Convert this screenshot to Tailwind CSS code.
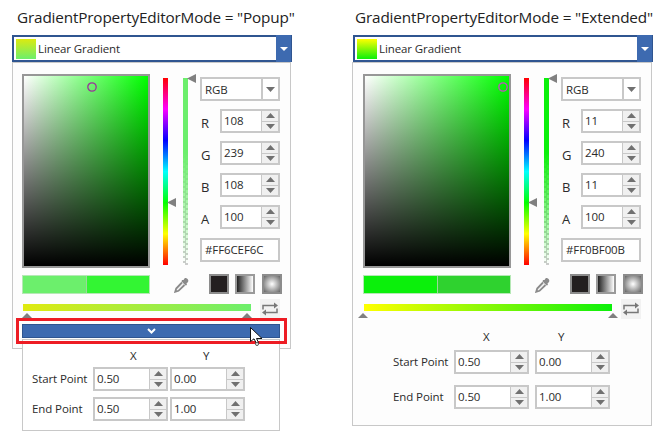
<!DOCTYPE html>
<html lang="en">
<head>
  <meta charset="UTF-8" />
  <title>GradientPropertyEditorMode</title>
  <script src="https://cdn.jsdelivr.net/npm/@tailwindcss/browser@4"></script>
</head>
<body class="bg-white w-[672px] h-[446px] overflow-hidden relative font-['Open_Sans',sans-serif] text-[11.5px] tracking-[-0.1px] text-[#2b2b2b]">
  <div class="flex items-start pl-[12px]">
    <div id="popup" class="w-[279px] shrink-0"></div>
    <div id="extended" class="w-[300px] ml-[61px] shrink-0"></div>
  </div>

  <!-- red highlight + mouse cursor over the popup toggle -->
  <div class="absolute left-[16px] top-[318px] w-[271px] h-[26px] border-[3px] border-[#ed1c24]"></div>
  <svg class="absolute left-[249px] top-[326px]" width="16" height="21" viewBox="0 0 16 21">
    <path d="M1.500 1.500 V15.500 L5 12.800 L7.500 17.500 L9.500 16.500 L7.500 12.500 H13 Z" fill="#fff" stroke="#111" stroke-width="1" />
    <circle cx="8" cy="18" r="1.500" fill="#fff" stroke="#555" stroke-width="1" />
  </svg>

  <script>
    function tri(dir) {
      // little grey thumbs next to the sliders
      if (dir === 'left') return '<svg width="9" height="9" viewBox="0 0 9 9"><polygon points="0,4.5 9,0 9,9" fill="#808080"/></svg>';
      return '';
    }

    function spin(w, h, value) {
      return `
        <div class="flex border-2 border-[#c8c8c8] bg-white box-border" style="width:${w}px;height:${h}px">
          <div class="flex-1 flex items-center pl-[2px] leading-none text-[11.5px]">${value}</div>
          <div class="w-[17px] flex flex-col gap-[1px] bg-[#c8c8c8] border-l border-[#c8c8c8]">
            <div class="flex-1 bg-[#f0f0f0] flex items-center justify-center"><svg width="9" height="5" viewBox="0 0 9 5"><polygon points="4.5,0 9,5 0,5" fill="#707070"/></svg></div>
            <div class="flex-1 bg-[#f0f0f0] flex items-center justify-center"><svg width="9" height="5" viewBox="0 0 9 5"><polygon points="0,0 9,0 4.5,5" fill="#707070"/></svg></div>
          </div>
        </div>`;
    }

    function rgbaRow(label, value) {
      return `
        <div class="flex items-center h-[24px]">
          <span class="w-[20px] pl-px pt-[5px] text-[13px] leading-none">${label}</span>
          ${spin(60, 24, value)}
        </div>`;
    }

    function header(title, titleLeft, titleTop, swatch, dropLeft, comboW) {
      return `
        <div class="h-[35px] text-[15.3px] leading-none whitespace-nowrap tracking-[-0.16px] text-[#222]" style="padding-left:${titleLeft}px;padding-top:${titleTop}px">${title}</div>
        <div class="h-[27px] border-2 border-[#2f5590] flex items-center pl-[2px] bg-white relative" style="margin-left:${dropLeft}px;width:${comboW}px">
          <div class="w-[20px] h-[20px] ${swatch}"></div>
          <span class="ml-[2px] flex-1 leading-none">Linear Gradient</span>
          <div class="w-[15px] h-[27px] -mr-px bg-[#3d6ab0] flex items-center justify-center"><svg width="8" height="4" viewBox="0 0 8 4"><polygon points="0,0 8,0 4,4" fill="#fff"/></svg></div>
        </div>`;
    }

    function editor(o) {
      return `
        <div class="grid grid-cols-[1fr_130px]">
          <div class="h-[194px] relative border-2 border-[#979797] bg-[linear-gradient(to_top,#000,transparent),linear-gradient(to_right,#fff,#00ff00)]">
            <svg class="absolute ${o.ring}" width="10" height="10" viewBox="0 0 10 10"><circle cx="5" cy="5" r="4.200" fill="none" stroke="${o.ringColor}" stroke-width="1.300"/></svg>
          </div>
          <div class="flex items-start pl-[13px] relative">
            <div class="w-[5px] h-[187px] mt-[4px] bg-[linear-gradient(to_bottom,#f00,#f0f,#00f,#0ff,#0f0,#ff0,#f00)]"></div>
            <div class="absolute left-[17px] top-[124px]">${tri('left')}</div>
            <div class="w-[5px] h-[187px] mt-[4px] ml-[15px] ${o.alpha} bg-[length:100%_100%,5px_5px]"></div>
            <div class="absolute left-[37px] top-[0px]">${tri('left')}</div>
            <div class="w-[80px] ml-[12px] mt-[3px] flex flex-col">
              <div class="h-[24px] border-2 border-[#c8c8c8] bg-white flex items-center">
                <span class="flex-1 pl-[3px] pt-px leading-none">RGB</span>
                <div class="w-[17px] h-full border-l-2 border-[#c8c8c8] flex items-center justify-center"><svg width="9" height="5" viewBox="0 0 9 5"><polygon points="0,0 9,0 4.5,5" fill="#707070"/></svg></div>
              </div>
              <div class="mt-[8px] flex flex-col gap-[8px]">
                ${o.rgba.map(r => rgbaRow(r[0], r[1])).join('')}
              </div>
              <div class="mt-[9px] h-[24px] border-2 border-[#c8c8c8] bg-white flex items-center pl-[3px] leading-none">${o.hex}</div>
            </div>
          </div>
        </div>

        <div class="grid grid-cols-[1fr_130px] mt-[7px]">
          <div class="h-[19px] flex border border-[#b5e8b5]">
            <div class="flex-1 ${o.oldColor}"></div>
            <div class="flex-1 border-l border-[#9ad89a] ${o.newColor}"></div>
          </div>
          <div class="flex items-start pl-[24px] -mt-px">
            <svg class="mt-[3px] shrink-0" width="16" height="16" viewBox="0 0 16 16" fill="none" stroke="#8a8a8a">
              <path d="M9.500 3 L10.500 1.500 C12 0 15.500 3 14 5 L12.500 6.500 L13 8 L11.500 8.500 L7.500 4.500 L8 3 Z" fill="#8a8a8a" stroke="none"/>
              <path d="M8 5.500 L2.200 11.500 L1.200 14.800 L4.500 13.800 L10.500 8" stroke-width="1.800" fill="#f4f4f4"/>
            </svg>
            <div class="ml-[19px] w-[20px] h-[20px] border-2 border-[#8c8c8c] bg-[#231f20] shrink-0"></div>
            <div class="ml-[6px] w-[20px] h-[20px] border-2 border-[#9a9a9a] bg-[linear-gradient(to_right,#222,#fff)] shrink-0"></div>
            <div class="ml-[7px] w-[20px] h-[20px] border-2 border-[#8c8c8c] bg-[radial-gradient(circle,#fff,#666)] shrink-0"></div>
          </div>
        </div>

        <div class="flex items-start mt-[5px]">
          <div class="relative mt-[5px] h-[7px] ml-px ${o.bar}" style="width:${o.barW}px">
            <svg class="absolute top-[9px]" style="left:${o.thumbL}px" width="10" height="5" viewBox="0 0 10 5"><polygon points="5,0 10,5 0,5" fill="#808080"/></svg>
            <svg class="absolute top-[9px]" style="left:${o.thumbR}px" width="10" height="5" viewBox="0 0 10 5"><polygon points="5,0 10,5 0,5" fill="#808080"/></svg>
          </div>
          <div class="ml-[9px] w-[20px] h-[20px] bg-[#f2f2f2] flex items-center justify-center">
            <svg width="16" height="14" viewBox="0 0 16 14" fill="none" stroke="#777" stroke-width="1.500">
              <path d="M1 7.500 V3.500 H12"/>
              <path d="M15 6.500 V10.500 H4"/>
              <polygon points="12,0.500 16,3.500 12,6.500" fill="#777" stroke="none"/>
              <polygon points="4,7.500 0,10.500 4,13.500" fill="#777" stroke="none"/>
            </svg>
          </div>
        </div>`;
    }

    function pointRow(label, x, y, gap) {
      return `
        <div class="flex items-center">
          <span class="w-[61px] leading-none">${label}</span>
          ${spin(75, 24, x)}
          <div class="shrink-0" style="width:${gap}px"></div>
          ${spin(75, 24, y)}
        </div>`;
    }

    document.getElementById('popup').innerHTML =
      header('GradientPropertyEditorMode = "Popup"', 5, 10, 'bg-[linear-gradient(to_bottom,#dcea10,#6cef6c)]', 0, 280) + `
      <div class="w-[279px] border border-[#c8c8c8] bg-[#fdfdfd] pl-[9px] pr-[10px] pt-[11px] pb-[10px]">
        ${editor({
          ring: 'left-[63px] top-[6px]',
          ringColor: '#993399',
          alpha: 'bg-[linear-gradient(to_bottom,#6cef6c,#6cef6c_40%,transparent),conic-gradient(#ccc_25%,#fff_0_50%,#ccc_0_75%,#fff_0)]',
          rgba: [['R', '108'], ['G', '239'], ['B', '108'], ['A', '100']],
          hex: '#FF6CEF6C',
          oldColor: 'bg-[#6cef6c]',
          newColor: 'bg-[#33f533]',
          bar: 'bg-[linear-gradient(to_right,#e0ea10,#6cef6c)]',
          barW: 228,
          thumbL: -1,
          thumbR: 219
        })}
        <button class="block w-[258px] h-[14px] mt-[5px] bg-[#3d6ab0] border border-[#2f5590]">
          <svg class="mx-auto" width="9" height="6" viewBox="0 0 9 6" fill="none" stroke="#fff" stroke-width="2"><path d="M1 1 L4.500 4.500 L8 1"/></svg>
        </button>
      </div>
      <div class="relative -mt-[10px] ml-[10px] w-[258px] h-[92px] border border-[#c8c8c8] bg-white">
        <div class="flex h-[27px] leading-none pt-[9px]">
          <span class="absolute left-[107px] top-[10px]">X</span>
          <span class="absolute left-[180px] top-[10px]">Y</span>
        </div>
        <div class="pl-[9px]">
          ${pointRow('Start Point', '0.50', '0.00', 2)}
          <div class="h-[6px]"></div>
          ${pointRow('End Point', '0.50', '1.00', 2)}
        </div>
      </div>`;

    document.getElementById('extended').innerHTML =
      header('GradientPropertyEditorMode = "Extended"', 3, 10, 'bg-[linear-gradient(to_bottom,#ffff00,#0bf00b)]', 1, 300) + `
      <div class="w-[300px] h-[364px] border border-[#c8c8c8] bg-[#fdfdfd] pl-[10px] pr-[10px] pt-[11px]">
        ${editor({
          ring: 'left-[133px] top-[6px]',
          ringColor: '#c050c0',
          alpha: 'bg-[linear-gradient(to_bottom,#0bf00b,#0bf00b_40%,transparent),conic-gradient(#ccc_25%,#fff_0_50%,#ccc_0_75%,#fff_0)]',
          rgba: [['R', '11'], ['G', '240'], ['B', '11'], ['A', '100']],
          hex: '#FF0BF00B',
          oldColor: 'bg-[#0bf00b]',
          newColor: 'bg-[#2fd22f]',
          bar: 'bg-[linear-gradient(to_right,#ffff00,#0bf00b)]',
          barW: 248,
          thumbL: -6,
          thumbR: 244
        })}
        <div class="relative h-[25px] leading-none">
          <span class="absolute left-[120px] top-[12px]">X</span>
          <span class="absolute left-[195px] top-[12px]">Y</span>
        </div>
        <div class="pl-[30px] mt-[6px]">
          ${pointRow('Start Point', '0.50', '0.00', 6)}
          <div class="h-[11px]"></div>
          ${pointRow('End Point', '0.50', '1.00', 6)}
        </div>
      </div>`;
  </script>
</body>
</html>
